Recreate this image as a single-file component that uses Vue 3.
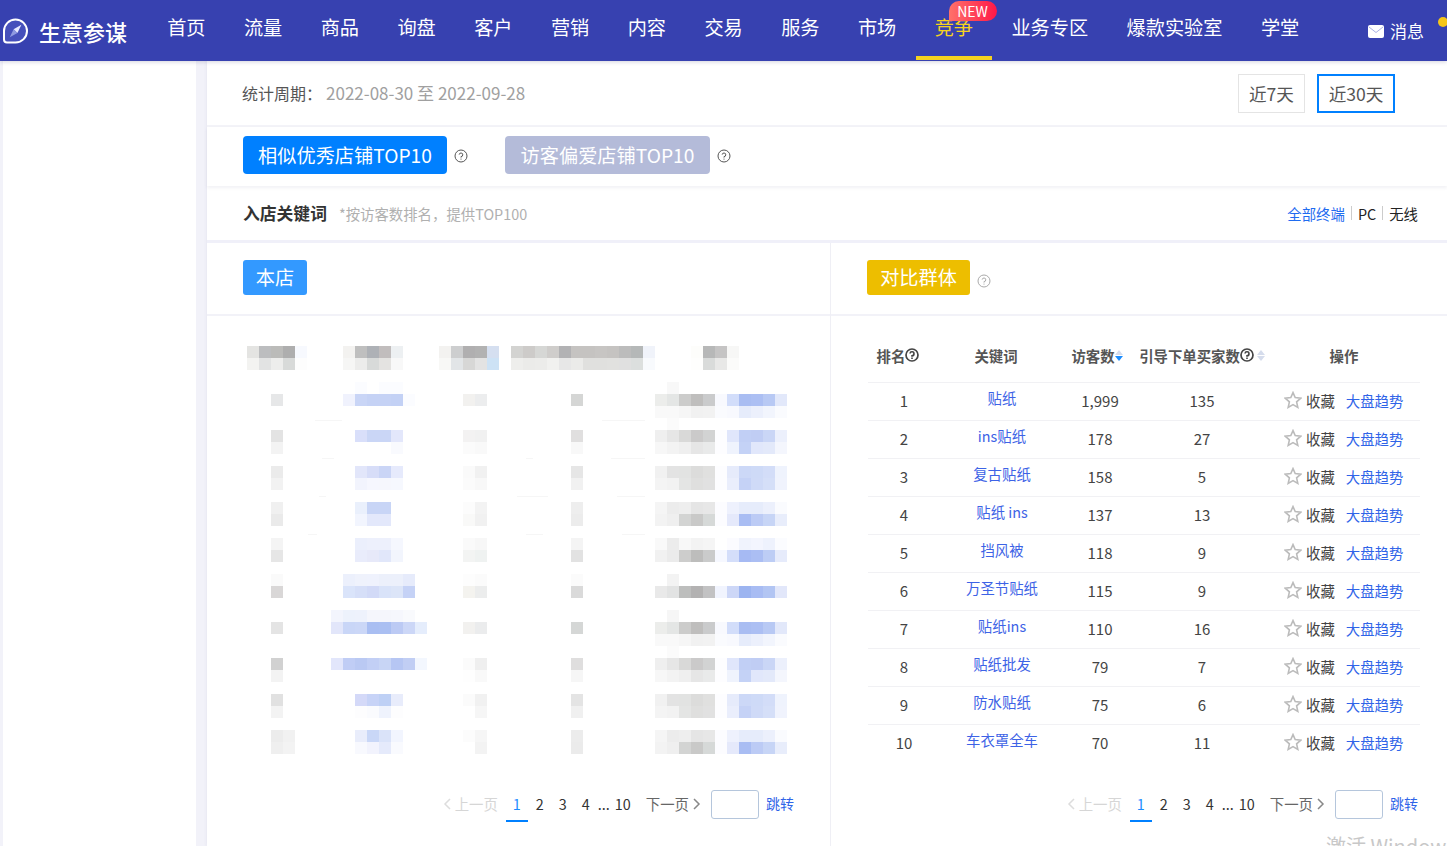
<script setup>
const navItems = ['首页', '流量', '商品', '询盘', '客户', '营销', '内容', '交易', '服务', '市场', '竞争', '业务专区', '爆款实验室', '学堂']

const rows = [
  ['1', '贴纸', '1,999', '135'],
  ['2', 'ins贴纸', '178', '27'],
  ['3', '复古贴纸', '158', '5'],
  ['4', '贴纸 ins', '137', '13'],
  ['5', '挡风被', '118', '9'],
  ['6', '万圣节贴纸', '115', '9'],
  ['7', '贴纸ins', '110', '16'],
  ['8', '贴纸批发', '79', '7'],
  ['9', '防水贴纸', '75', '6'],
  ['10', '车衣罩全车', '70', '11']
]

const pages = ['1', '2', '3', '4']
const panels = ['left', 'right']

// 打码区域的色块：行号、起始列、颜色
const strongA = ['#ecedeb', '#e4e6e5', '#cccccb', '#bfbebd', '#cacbcc', '#f8f9fe', '#d2ddfa', '#a9bdf2', '#acbff3', '#b8c9f4', '#e2e8fa']
const faintA = ['#f9f9f9', '#f9f9f9', '#f6f6f6', '#f1f1f1', '#f2f2f2', '#fafbfe', '#f8f9fe', '#e6ecfb', '#ecf0fc', '#f2f5fd', '#fafbfe']
const midB1 = ['#efefef', '#e6e6e6', '#d9d9d8', '#cbcaca', '#d2d3d3', '#fdfdff', '#e0e6fb', '#c1cff5', '#c0cdf4', '#cad6f6', '#ecf0fc']
const midB2 = ['#f7f7f7', '#f3f3f3', '#efefef', '#e6e6e6', '#e9eaea', '#fdfdff', '#eff3fd', '#c4d2f6', '#e1e7fb', '#e3e9fa', '#f4f6fd']
const midC1 = ['#f1f1f1', '#e3e3e3', '#e2e3e2', '#dcdcdb', '#e0e0df', '#fdfdff', '#e6ebfb', '#ccd8f7', '#cedaf7', '#d3ddf8', '#eff3fd']
const midC2 = ['#f4f4f4', '#f2f2f2', '#e4e5e4', '#dfdfde', '#e1e1e1', '#fdfdff', '#eaeefc', '#c5d2f6', '#cfdaf7', '#d5dff8', '#f0f3fd']
const midD1 = ['#f5f5f5', '#ececec', '#eeeeee', '#e5e5e5', '#e7e7e7', '#fcfcff', '#eef1fd', '#e6ecfb', '#e6ecfb', '#ecf0fc', '#fafbfe']
const midD2 = ['#f3f3f3', '#efefef', '#d3d4d3', '#c9c9c8', '#d6d9d8', '#fcfcff', '#e5e9fb', '#a9bdf3', '#bccbf5', '#c7d5f6', '#e8edfb']

const runs = [
  [0, 0, ['#e4e4e2', '#bcbdbf', '#bbbbb9', '#aeaeae', '#f7f9fe']],
  [0, 8, ['#f3f2f0', '#bfbfbf', '#aeb1b6', '#c1bdbd', '#edf0f2']],
  [0, 16, ['#f3f2f0', '#cdcecf', '#b0afb0', '#b2b2b2', '#d5dff0']],
  [0, 22, ['#d3d3d1', '#cdcbc9', '#d6d7d5', '#cfcdcb', '#b2b2b4', '#c5c3c1', '#c5c3c1', '#c7c5c3', '#c5c3c1', '#bcbcbc', '#b5b8b8', '#f0f3fa']],
  [0, 37, ['#fdfdfb', '#b7b8b8', '#c5c4c4', '#f7f7f6']],
  [1, 0, ['#f3f3f1', '#e2e3e3', '#ededec', '#d8dad9', '#fdfdfd']],
  [1, 8, ['#f6f6f5', '#ececeb', '#d8dad9', '#e4e3e1', '#f8f8f8']],
  [1, 16, ['#f8f8f6', '#e2e5e7', '#d7d7d6', '#e3e3e3', '#cde2f5']],
  [1, 22, ['#eeeeec', '#ebebe9', '#ececea', '#f1f1ef', '#e7e7e7', '#ebebe9', '#e0e0de', '#e0e0de', '#e1e1df', '#e0e0e0', '#dcdfde', '#f8fafd']],
  [1, 37, ['#fefefd', '#d9dbda', '#e8e8e7', '#fbfbfa']],

  [3, 9, ['#fbfcff']], [3, 11, ['#fbfcff', '#fbfcff']], [3, 35, ['#f8f8f8']],
  [4, 2, ['#e6e7e8']], [4, 8, ['#f0f2fd', '#c9d5f6', '#c5d2f5', '#c5d2f5', '#c3d1f5', '#fbfcff']],
  [4, 18, ['#f2f1ef', '#ecedee']], [4, 27, ['#d5d6d5']], [4, 34, strongA],
  [5, 34, faintA],

  [6, 35, ['#fbfbfb']],
  [7, 2, ['#e3e3e3']], [7, 9, ['#d9dffa', '#cad6f6', '#cad6f6', '#e3e7fb']],
  [7, 18, ['#f3f2f2', '#f1f1f1']], [7, 27, ['#e0dfdf']], [7, 34, midB1],
  [8, 2, ['#f3f3f3']], [8, 12, ['#f9fafe']], [8, 18, ['#fbfbfb', '#f9f9f9']], [8, 27, ['#f8f8f8']], [8, 34, midB2],

  [10, 2, ['#ebebeb']], [10, 9, ['#e2e6fa', '#d7ddf8', '#cad5f6', '#e6eafc']],
  [10, 18, ['#fafafa', '#f1f1f1']], [10, 27, ['#e6e6e6']], [10, 34, midC1],
  [11, 2, ['#f2f2f2']], [11, 9, ['#f2f4fd', '#f6f7fe', '#f6f7fd', '#f6f8fe']],
  [11, 18, ['#fbfbfb', '#f8f8f8']], [11, 27, ['#f1f1f1']], [11, 34, midC2],

  [13, 2, ['#f0f0f0']], [13, 9, ['#eaf0fc', '#c8d5f6', '#c8d5f6']],
  [13, 18, ['#fcfcfc', '#f3f3f3']], [13, 27, ['#eeeeee']], [13, 34, midD1],
  [14, 2, ['#eaeaea']], [14, 9, ['#f2f5fe', '#e3e8fb', '#e3e8fb']],
  [14, 18, ['#f9f9f8', '#f1f1f1']], [14, 27, ['#ececec']], [14, 34, midD2],

  [16, 2, ['#f4f4f4']], [16, 9, ['#ebeffc', '#edf0fc', '#edf0fc', '#f5f7fe']],
  [16, 18, ['#fafafa', '#f7f7f7']], [16, 27, ['#f4f4f4']],
  [16, 34, ['#f9f9f9', '#ececec', '#f8f8f8', '#f3f3f3', '#f5f5f5', '#ffffff', '#fbfbff', '#f0f3fd', '#f3f5fe', '#eef2fd', '#fbfcff']],
  [17, 2, ['#e6e6e6']], [17, 9, ['#e9ecfb', '#e7e9f9', '#e1e7fa', '#f2f5fd']],
  [17, 18, ['#f3f4f3', '#eff2f1']], [17, 27, ['#e2e2e2']],
  [17, 34, ['#f1f1f1', '#ebebeb', '#cdcdcc', '#bdbdbc', '#cacbcb', '#f6f8ff', '#d4defa', '#a6baf3', '#abbef3', '#bdcdf5', '#e6ebfb']],

  [19, 2, ['#fafafa']], [19, 8, ['#ecf0fc', '#eff2fc', '#eff2fd', '#ecf0fb', '#ecf0fb', '#e6ebfb']],
  [19, 18, ['#fdfdfd', '#fbfbfb']], [19, 27, ['#fbfbfb']], [19, 35, ['#f3f3f3']],
  [20, 2, ['#d9d7d7']], [20, 8, ['#dae4fa', '#d6dff8', '#d2daf7', '#d9e3f9', '#dce5f8', '#c5d2f6']],
  [20, 18, ['#f4f3ef', '#eceded']], [20, 27, ['#dadada']],
  [20, 34, ['#e9e9e9', '#e2e3e3', '#bdbebd', '#b3b2b2', '#c2c2c3', '#f1f4fe', '#cdd7f7', '#9cb4f0', '#a8bcf3', '#b2c5f3', '#e2e7fa']],

  [22, 7, ['#f3f5fd', '#edf2fc', '#eef2fc', '#f5f6fc', '#f5f6fc', '#f6f7fd', '#f9fafd']], [22, 35, ['#f6f6f6']],
  [23, 2, ['#e4e4e4']], [23, 7, ['#e2e6fa', '#c9d6f7', '#cbd7f7', '#a9bef2', '#aabff2', '#bccaf4', '#ccd7f7', '#e5edfc']],
  [23, 18, ['#f2f1ef', '#ebeced']], [23, 27, ['#d5d7d6']], [23, 34, strongA],
  [24, 34, faintA],

  [25, 35, ['#fbfbfb']],
  [26, 2, ['#d1d1d1']], [26, 7, ['#e2e6fb', '#c0cdf5', '#bac9f3', '#c2cff5', '#c8d5f5', '#b6c6f3', '#c1cef4', '#f3f7fe']],
  [26, 18, ['#fbfbfb', '#efefef']], [26, 27, ['#dfdede']], [26, 34, midB1],
  [27, 2, ['#f3f3f3']], [27, 18, ['#fefefe', '#f9f9f9']], [27, 27, ['#f6f6f6']], [27, 34, midB2],

  [29, 2, ['#e1e1e1']], [29, 9, ['#d4d9f8', '#c7d3f7', '#bed0f5', '#e8ecfb']],
  [29, 18, ['#fbfbfb', '#f1f1f1']], [29, 27, ['#e4e4e4']], [29, 34, midC1],
  [30, 2, ['#f3f3f3']], [30, 9, ['#fdfdfe', '#fafbfe', '#eff3fd', '#fdfdfe']],
  [30, 19, ['#f6f6f6']], [30, 27, ['#f0f0f0']], [30, 34, midC2],

  [32, 2, ['#ececec', '#f1f1f1']], [32, 9, ['#e9edfb', '#c9d7f7', '#dae3f9', '#f2f5fe']],
  [32, 18, ['#fcfcfc', '#f6f6f6']], [32, 27, ['#ececec']], [32, 34, midD1],
  [33, 2, ['#efefef', '#f3f3f3']], [33, 9, ['#f8f9fe', '#f2f3fd', '#e5eafb', '#f9fafe']],
  [33, 19, ['#f3f3f3']], [33, 27, ['#ebebeb']], [33, 34, midD2]
]

const cells = runs.flatMap(([row, col, colors]) =>
  colors.map((color, i) => ({ key: `${row}-${col + i}`, row: row + 1, col: col + i + 1, color }))
)

// 打码后残留的表格横线：页面 y、起止 x
const streaks = [
  [420, 315, 342], [420, 602, 645],
  [458, 322, 334], [458, 526, 533], [458, 611, 645],
  [496, 319, 326], [496, 517, 548], [496, 617, 645],
  [534, 308, 317], [534, 526, 543], [534, 622, 645]
].map(([y, x1, x2]) => ({ key: `${y}-${x1}`, top: `${y - 346}px`, left: `${x1 - 247}px`, width: `${x2 - x1}px` }))
</script>

<template>
  <div class="page">
    <header class="topbar">
      <div class="brand">
        <svg class="brand-icon" viewBox="0 0 26 26" width="26" height="26">
          <path d="M13.5 1.5A11.5 11.5 0 1 1 13.5 24.5H5A3 3 0 0 1 2 21.5V13A11.5 11.5 0 0 1 13.5 1.5Z" fill="#4650bb" stroke="#fff" stroke-width="2" />
          <path d="M19.4 6.8 15.4 15 11.6 11.2Z" fill="#e8eaff" />
          <path d="M7.8 19.2 11.6 11.2 15.4 15Z" fill="#8f9ae0" />
        </svg>
        <span class="brand-name">生意参谋</span>
      </div>
      <nav class="nav">
        <a v-for="item in navItems" :key="item" class="nav-item" :class="{ active: item === '竞争' }">
          {{ item }}
          <span v-if="item === '竞争'" class="new-badge">NEW</span>
        </a>
      </nav>
      <div class="message">
        <svg viewBox="0 0 18 15" width="18" height="15">
          <rect x="1" y="1" width="16" height="13" rx="2" fill="#fff" />
          <path d="M2 3 9 8.5 16 3" fill="none" stroke="#aab2e4" stroke-width="1" />
        </svg>
        <span>消息</span>
        <i class="dot"></i>
      </div>
    </header>

    <div class="layout">
      <aside class="sidebar"></aside>

      <main class="content">
        <section class="period">
          <p class="period-text">统计周期：<span>2022-08-30 至 2022-09-28</span></p>
          <div class="ranges">
            <button class="range">近7天</button>
            <button class="range on">近30天</button>
          </div>
        </section>

        <section class="tabs">
          <button class="tab primary">相似优秀店铺TOP10</button>
          <svg class="help" viewBox="0 0 14 14" width="14" height="14">
            <circle cx="7" cy="7" r="6" fill="none" stroke="#555" stroke-width="1" />
            <path d="M5.2 5.6A1.8 1.8 0 1 1 7 7.6V8.6M7 9.6V10.6" fill="none" stroke="#555" stroke-width="1" />
          </svg>
          <button class="tab muted">访客偏爱店铺TOP10</button>
          <svg class="help" viewBox="0 0 14 14" width="14" height="14">
            <circle cx="7" cy="7" r="6" fill="none" stroke="#555" stroke-width="1" />
            <path d="M5.2 5.6A1.8 1.8 0 1 1 7 7.6V8.6M7 9.6V10.6" fill="none" stroke="#555" stroke-width="1" />
          </svg>
        </section>

        <section class="title-bar">
          <h2>入店关键词</h2>
          <span class="note">*按访客数排名，提供TOP100</span>
          <div class="terminals">
            <a class="on">全部终端</a><i></i><a>PC</a><i></i><a>无线</a>
          </div>
        </section>

        <section class="panels">
          <div v-for="panel in panels" :key="panel" class="panel" :class="panel">
            <div class="panel-head">
              <span v-if="panel === 'left'" class="badge blue">本店</span>
              <template v-else>
                <span class="badge yellow">对比群体</span>
                <svg class="help light" viewBox="0 0 14 14" width="14" height="14">
                  <circle cx="7" cy="7" r="6" fill="none" stroke="#aaa" stroke-width="1" />
                  <path d="M5.2 5.6A1.8 1.8 0 1 1 7 7.6V8.6M7 9.6V10.6" fill="none" stroke="#aaa" stroke-width="1" />
                </svg>
              </template>
            </div>

            <div class="panel-body">
              <div v-if="panel === 'left'" class="mosaic">
                <i
                  v-for="cell in cells"
                  :key="cell.key"
                  :style="{ gridRow: cell.row, gridColumn: cell.col, background: cell.color }"
                ></i>
                <b
                  v-for="s in streaks"
                  :key="s.key"
                  class="streak"
                  :style="{ top: s.top, left: s.left, width: s.width }"
                ></b>
              </div>

              <div v-else class="table">
                <div class="thead">
                  <span>排名<svg class="th-help" viewBox="0 0 14 14" width="14" height="14"><circle cx="7" cy="7" r="6" fill="none" stroke="#444" stroke-width="1.7" /><path d="M5 5.5A2 2 0 1 1 7 7.8V8.8M7 9.6V11" fill="none" stroke="#444" stroke-width="1.6" /></svg></span>
                  <span>关键词</span>
                  <span>访客数<i class="sort"><b class="up"></b><b class="down blue-arrow"></b></i></span>
                  <span>引导下单买家数<svg class="th-help" viewBox="0 0 14 14" width="14" height="14"><circle cx="7" cy="7" r="6" fill="none" stroke="#444" stroke-width="1.7" /><path d="M5 5.5A2 2 0 1 1 7 7.8V8.8M7 9.6V11" fill="none" stroke="#444" stroke-width="1.6" /></svg><i class="sort spaced"><b class="up"></b><b class="down"></b></i></span>
                  <span>操作</span>
                </div>
                <div v-for="row in rows" :key="row[0]" class="tr">
                  <span>{{ row[0] }}</span>
                  <a class="keyword">{{ row[1] }}</a>
                  <span>{{ row[2] }}</span>
                  <span>{{ row[3] }}</span>
                  <div class="ops">
                    <svg viewBox="0 0 18 18" width="18" height="18">
                      <path d="M9 1.6 11.2 6.6 16.8 7.2 12.6 10.9 13.8 16.4 9 13.6 4.2 16.4 5.4 10.9 1.2 7.2 6.8 6.6Z" fill="none" stroke="#bbb" stroke-width="1.6" />
                    </svg>
                    <span class="fav">收藏</span>
                    <a>大盘趋势</a>
                  </div>
                </div>
              </div>
            </div>

            <div class="pager">
              <span class="prev">
                <svg viewBox="0 0 8 14" width="8" height="14"><path d="M7 2 2 7 7 12" fill="none" stroke="#ddd" stroke-width="1.5" /></svg>
                上一页
              </span>
              <a v-for="p in pages" :key="p" class="num" :class="{ current: p === '1' }">{{ p }}</a>
              <span class="dots">...</span>
              <a class="num ten">10</a>
              <span class="next">
                下一页
                <svg viewBox="0 0 8 14" width="8" height="14"><path d="M1 2 6 7 1 12" fill="none" stroke="#888" stroke-width="1.5" /></svg>
              </span>
              <input class="jump-input" type="text" />
              <a class="jump">跳转</a>
            </div>
          </div>
        </section>
      </main>
    </div>

    <div class="watermark">激活 Windows</div>
  </div>
</template>

<style>
html,
body {
  margin: 0;
  background: #f2f2f9;
}
</style>

<style scoped>
.page {
  position: relative;
  height: 846px;
  overflow: hidden;
  background: #f2f2f9;
  font-family: "Noto Sans CJK SC", "Noto Sans", sans-serif;
  color: #333;
}

/* 顶部导航 */
.topbar {
  position: relative;
  z-index: 2;
  display: flex;
  height: 61px;
  background: #3741b0;
  box-shadow: 0 1px 4px rgba(40, 40, 90, 0.2);
  color: #fff;
}

.brand {
  display: flex;
  align-items: center;
  width: 148px;
  padding-left: 2px;
  box-sizing: border-box;
}

.brand-icon {
  flex: none;
}

.brand-name {
  margin-left: 11px;
  font-size: 22px;
  font-weight: 500;
  white-space: nowrap;
}

.nav {
  display: flex;
  height: 60px;
}

.nav-item {
  position: relative;
  display: flex;
  align-items: center;
  padding: 0 19.2px 2px;
  font-size: 19.2px;
  white-space: nowrap;
  border-bottom: 4px solid transparent;
  box-sizing: border-box;
}

.nav-item.active {
  color: #f5d21f;
  border-bottom-color: #f5d21f;
}

.new-badge {
  position: absolute;
  top: 1px;
  left: 33px;
  width: 48px;
  height: 20px;
  border-radius: 10px 10px 10px 0;
  background: linear-gradient(90deg, #ff716a, #ff1848);
  color: #fff;
  font-size: 14px;
  line-height: 20px;
  text-align: center;
}

.message {
  position: absolute;
  top: 19px;
  left: 1367px;
  display: flex;
  align-items: center;
  gap: 5px;
  font-size: 17px;
  line-height: 24px;
}

.dot {
  position: absolute;
  top: -2px;
  left: 71px;
  width: 10px;
  height: 10px;
  border-radius: 50%;
  background: #f5c518;
}

/* 主体 */
.layout {
  display: flex;
  height: 785px;
}

.sidebar {
  width: 193px;
  margin-left: 3px;
  background: #fff;
}

.content {
  flex: 1;
  min-width: 0;
  margin-left: 11px;
  background: #fff;
  display: flex;
  flex-direction: column;
  box-shadow: -1px 0 3px rgba(60, 60, 110, 0.05);
}

.period {
  display: flex;
  align-items: center;
  justify-content: space-between;
  height: 66px;
  padding: 0 52px 0 35px;
  box-sizing: border-box;
  border-bottom: 2px solid #f3f3f8;
}

.period-text {
  margin: -2px 0 0;
  font-size: 16px;
  color: #555;
}

.period-text span {
  margin-left: 4px;
  font-size: 17px;
  color: #a0a0a0;
}

.ranges {
  display: flex;
  gap: 12px;
}

.range {
  width: 67px;
  height: 39px;
  padding: 0;
  border: 1px solid #e4e4e4;
  background: #fff;
  color: #555;
  font: 17.6px "Noto Sans CJK SC", "Noto Sans", sans-serif;
}

.range.on {
  width: 78px;
  border: 2px solid #0080ff;
}

.tabs {
  display: flex;
  align-items: flex-start;
  height: 59px;
  padding: 9px 0 0 36px;
  box-sizing: border-box;
  box-shadow: 0 2px 3px rgba(80, 80, 130, 0.08);
}

.tab {
  height: 38px;
  width: 204px;
  border: none;
  border-radius: 4px;
  color: #fff;
  font: 19.2px "Noto Sans CJK SC", "Noto Sans", sans-serif;
  padding: 0;
  white-space: nowrap;
}

.tab.primary {
  background: #0080ff;
}

.tab.muted {
  width: 205px;
  background: #b4bbd9;
}

.help {
  margin: 13px 37px 0 7px;
}

.title-bar {
  display: flex;
  align-items: center;
  height: 57px;
  padding: 0 29px 0 36px;
  box-sizing: border-box;
  border-bottom: 3px solid #f0f0f9;
}

.title-bar h2 {
  margin: 0;
  font-size: 16.8px;
  font-weight: 700;
  color: #333;
}

.note {
  margin-left: 12px;
  font-size: 14.4px;
  color: #b0b0b0;
}

.terminals {
  display: flex;
  align-items: center;
  margin-left: auto;
  font-size: 14.4px;
  color: #222;
}

.terminals .on {
  color: #1f6cf0;
}

.terminals i {
  width: 1px;
  height: 14px;
  margin: 0 6px;
  background: #ccc;
}

.panels {
  flex: 1;
  display: flex;
  min-height: 0;
}

.panel {
  display: flex;
  flex-direction: column;
}

.panel.left {
  width: 623px;
  border-right: 1px solid #efeff5;
}

.panel.right {
  flex: 1;
  min-width: 0;
}

.panel-head {
  display: flex;
  align-items: center;
  height: 73px;
  padding: 0 0 2px 36px;
  box-sizing: border-box;
  border-bottom: 2px solid #f2f2f8;
}

.badge {
  height: 35px;
  border-radius: 3px;
  color: #fff;
  font-size: 19.2px;
  line-height: 35px;
  text-align: center;
}

.badge.blue {
  width: 64px;
  background: #3399ff;
}

.badge.yellow {
  width: 103px;
  background: #edbe00;
}

.help.light {
  margin: 6px 0 0 7px;
}

.panel-body {
  height: 444px;
  box-sizing: border-box;
}

.mosaic {
  position: relative;
  display: grid;
  grid-template-columns: repeat(46, 12px);
  grid-template-rows: repeat(34, 12px);
  margin: 30px 0 0 40px;
}

.streak {
  position: absolute;
  height: 1px;
  background: #f6f6f6;
}

.table {
  margin: 14px 27px 0 37px;
  font-size: 15px;
}

.thead,
.tr {
  display: grid;
  grid-template-columns: 72px 124px 72px 132px 152px;
  align-items: center;
  text-align: center;
}

.thead {
  height: 52px;
  padding-bottom: 2px;
  box-sizing: border-box;
  font-size: 14.4px;
  font-weight: 700;
  color: #555;
}

.thead span {
  display: flex;
  align-items: center;
  justify-content: center;
  white-space: nowrap;
}

.thead span:nth-child(1),
.thead span:nth-child(2) {
  padding-right: 12px;
}

.thead span:nth-child(3) {
  padding-right: 6px;
}

.th-help {
  flex: none;
  width: 14px;
  height: 14px;
}

.sort {
  display: inline-flex;
  flex-direction: column;
  gap: 1px;
}

.sort.spaced {
  margin-left: 3px;
}

.sort b {
  width: 0;
  height: 0;
  border-left: 4px solid transparent;
  border-right: 4px solid transparent;
}

.sort .up {
  border-bottom: 5px solid #d5dcec;
}

.sort .down {
  border-top: 5px solid #d5dcec;
}

.sort .blue-arrow {
  border-top-color: #1a8cff;
}

.tr {
  height: 38px;
  padding-bottom: 3px;
  border-top: 1px solid #f1f1f4;
  box-sizing: border-box;
  color: #444;
}

.keyword {
  margin-top: -5px;
  font-size: 14.4px;
  color: #3d63e6;
}

.ops {
  display: flex;
  align-items: center;
  padding-left: 16px;
  font-size: 14.4px;
}

.ops svg {
  flex: none;
  margin-top: -1px;
}

.fav {
  margin: 1px 0 0 4px;
  color: #444;
}

.ops a {
  margin: 1px 0 0 11px;
  color: #2f64e8;
  white-space: nowrap;
}

.pager {
  display: flex;
  align-items: flex-start;
  justify-content: flex-end;
  margin-top: 30px;
  padding-right: 36px;
  font-size: 14.4px;
  line-height: 27px;
}

.right .pager {
  padding-right: 29px;
}

.prev {
  display: flex;
  align-items: center;
  gap: 4px;
  color: #d6d6d6;
  margin-right: 8px;
}

.num {
  width: 22px;
  height: 32px;
  margin-right: 1px;
  box-sizing: border-box;
  text-align: center;
  color: #333;
}

.num.current {
  color: #1a8cff;
  border-bottom: 2px solid #0080ff;
}

.dots {
  width: 12px;
  margin-right: 1px;
  color: #333;
}

.num.ten {
  width: 24px;
  margin-right: 11px;
}

.next {
  display: flex;
  align-items: center;
  gap: 4px;
  color: #666;
  margin-right: 10px;
}

.jump-input {
  width: 48px;
  height: 29px;
  padding: 0;
  border: 1px solid #b5c6dc;
  border-radius: 3px;
  box-sizing: border-box;
  background: #fff;
}

.jump {
  margin-left: 7px;
  font-size: 14px;
  color: #2f64e8;
}

.watermark {
  position: absolute;
  top: 831px;
  left: 1326px;
  font-size: 20px;
  color: #c8c8c8;
  white-space: nowrap;
}
</style>
